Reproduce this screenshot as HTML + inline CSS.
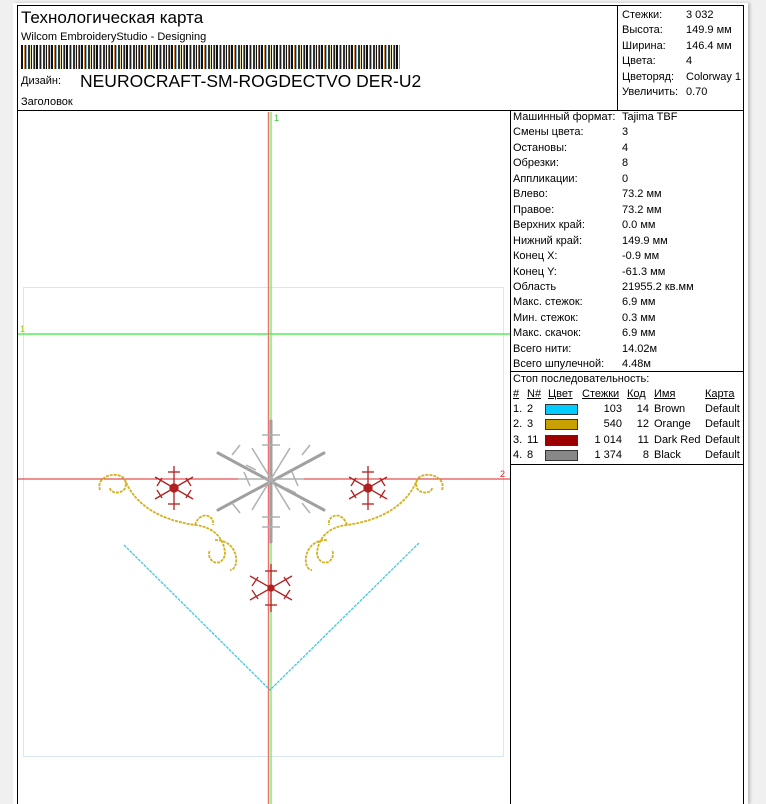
<!DOCTYPE html>
<html style="width:766px;height:804px;overflow:hidden"><head><meta charset="utf-8"><style>
*{margin:0;padding:0;box-sizing:border-box}
body{width:766px;height:804px;background:#f0f0f0;position:relative;overflow:hidden;font-family:"Liberation Sans",sans-serif;color:#000}
.a{position:absolute;white-space:nowrap}
.page{position:absolute;left:13px;top:3px;width:735px;height:801px;background:#fff;box-shadow:2px 0 3px #bbb}
.r{font-size:11px;line-height:15.45px}
.u{text-decoration:underline}
</style></head><body>
<div class="page"></div>
<div class="a" style="left:17px;top:5px;width:727px;height:799px;border:1px solid #000;border-bottom:none"></div>
<div class="a" style="left:17px;top:110px;width:727px;border-top:1.5px solid #000"></div>
<div class="a" style="left:617px;top:5px;width:127px;height:106px;border:1px solid #000"></div>
<div class="a" style="left:510px;top:111px;height:693px;border-left:1px solid #000"></div>
<div class="a" style="left:510px;top:371px;width:234px;border-top:1px solid #000"></div>
<div class="a" style="left:510px;top:464px;width:234px;border-top:1px solid #000"></div>

<div class="a" style="left:21px;top:8px;font-size:17px">Технологическая карта</div>
<div class="a" style="left:21px;top:31px;font-size:11px">Wilcom EmbroideryStudio - Designing</div>
<div class="a" style="left:21px;top:45px;width:379px;height:24px;background:repeating-linear-gradient(90deg,#111 0 2px,#fff 2px 3px,#d8842c 3px 4px,#222 4px 5px,#7ab8e0 5px 6px,#fff 6px 7px,#333 7px 9px,#f0e090 9px 10px,#111 10px 11px,#fff 11px 12px,#8a6a50 12px 13px,#222 13px 14px,#c0d8f0 14px 15px)"></div>
<div class="a" style="left:21px;top:75px;font-size:11px">Дизайн:</div>
<div class="a" style="left:80px;top:71px;font-size:17.5px">NEUROCRAFT-SM-ROGDECTVO DER-U2</div>
<div class="a" style="left:21px;top:96px;font-size:11px">Заголовок</div>

<div class="a r" style="left:622px;top:8px">Стежки:<br>Высота:<br>Ширина:<br>Цвета:<br>Цветоряд:<br>Увеличить:</div>
<div class="a r" style="left:686px;top:8px">3 032<br>149.9 мм<br>146.4 мм<br>4<br>Colorway 1<br>0.70</div>

<div class="a r" style="left:513px;top:110px">Машинный формат:<br>Смены цвета:<br>Остановы:<br>Обрезки:<br>Аппликации:<br>Влево:<br>Правое:<br>Верхних край:<br>Нижний край:<br>Конец X:<br>Конец Y:<br>Область<br>Макс. стежок:<br>Мин. стежок:<br>Макс. скачок:<br>Всего нити:<br>Всего шпулечной:</div>
<div class="a r" style="left:622px;top:110px">Tajima TBF<br>3<br>4<br>8<br>0<br>73.2 мм<br>73.2 мм<br>0.0 мм<br>149.9 мм<br>-0.9 мм<br>-61.3 мм<br>21955.2 кв.мм<br>6.9 мм<br>0.3 мм<br>6.9 мм<br>14.02м<br>4.48м</div>

<div class="a r" style="left:513px;top:372px">Стоп последовательность:</div>
<div class="a r u" style="left:513px;top:387px">#</div>
<div class="a r u" style="left:527px;top:387px">N#</div>
<div class="a r u" style="left:548px;top:387px">Цвет</div>
<div class="a r u" style="left:582px;top:387px">Стежки</div>
<div class="a r u" style="left:627px;top:387px">Код</div>
<div class="a r u" style="left:654px;top:387px">Имя</div>
<div class="a r u" style="left:705px;top:387px">Карта</div>
<div class="a r" style="left:513px;top:402px">1.<br>2.<br>3.<br>4.</div>
<div class="a r" style="left:527px;top:402px">2<br>3<br>11<br>8</div>
<div class="a" style="left:545px;top:404px;width:33px;height:11px;background:#00ccff;border:1px solid #333"></div>
<div class="a" style="left:545px;top:419px;width:33px;height:11px;background:#c8a000;border:1px solid #333"></div>
<div class="a" style="left:545px;top:435px;width:33px;height:11px;background:#9c0000;border:1px solid #333"></div>
<div class="a" style="left:545px;top:450px;width:33px;height:11px;background:#888;border:1px solid #333"></div>
<div class="a r" style="left:582px;top:402px;width:40px;text-align:right">103<br>540<br>1 014<br>1 374</div>
<div class="a r" style="left:626px;top:402px;width:23px;text-align:right">14<br>12<br>11<br>8</div>
<div class="a r" style="left:654px;top:402px">Brown<br>Orange<br>Dark Red<br>Black</div>
<div class="a r" style="left:705px;top:402px">Default<br>Default<br>Default<br>Default</div>

<svg class="a" style="left:0;top:0" width="766" height="804">
<rect x="23.5" y="287.5" width="480" height="469" fill="none" stroke="#d8e8ee"/>
<line x1="18" y1="334" x2="510" y2="334" stroke="#55ee55" stroke-width="1.5"/>
<line x1="271" y1="112" x2="271" y2="804" stroke="#55ee55" stroke-width="1.2"/>
<line x1="268.5" y1="112" x2="268.5" y2="804" stroke="#f07070" stroke-width="1.5"/>
<line x1="18" y1="479" x2="510" y2="479" stroke="#e02020" stroke-width="1"/>
<text x="274" y="121" font-size="9" fill="#33cc33" font-family="Liberation Sans">1</text>
<text x="20" y="332" font-size="9" fill="#99cc00" font-family="Liberation Sans">1</text>
<text x="500" y="477" font-size="9" fill="#e02020" font-family="Liberation Sans">2</text>
<polyline points="124,545 270,690 419,543" fill="none" stroke="#40c8e0" stroke-width="1.3" stroke-dasharray="3,1"/>
<g stroke="#a0a0a0" stroke-width="3" stroke-linecap="round">
<line x1="271" y1="421" x2="271" y2="542"/><line x1="218" y1="453" x2="324" y2="510"/><line x1="218" y1="510" x2="324" y2="453"/>
</g>
<g stroke="#b0b0b0" stroke-width="1.5">
<line x1="238" y1="479" x2="304" y2="479"/><line x1="252" y1="448" x2="290" y2="510"/><line x1="252" y1="510" x2="290" y2="448"/>
<line x1="262" y1="435" x2="280" y2="435"/><line x1="262" y1="527" x2="280" y2="527"/><line x1="262" y1="445" x2="280" y2="445"/><line x1="262" y1="517" x2="280" y2="517"/>
<line x1="232" y1="455" x2="240" y2="445"/><line x1="302" y1="455" x2="310" y2="445"/><line x1="232" y1="503" x2="240" y2="513"/><line x1="302" y1="503" x2="310" y2="513"/>
<line x1="244" y1="472" x2="250" y2="486"/><line x1="292" y1="472" x2="298" y2="486"/><line x1="246" y1="465" x2="256" y2="470"/><line x1="286" y1="488" x2="296" y2="493"/>
</g>
<g stroke="#b02020" stroke-width="1.3">
<g transform="translate(174,488)"><line x1="0" y1="-22" x2="0" y2="22"/><line x1="-19" y1="-11" x2="19" y2="11"/><line x1="-19" y1="11" x2="19" y2="-11"/><line x1="-6" y1="-16" x2="6" y2="-16"/><line x1="-6" y1="16" x2="6" y2="16"/><line x1="-17" y1="-2" x2="-12" y2="-10"/><line x1="17" y1="2" x2="12" y2="10"/><line x1="-17" y1="2" x2="-12" y2="10"/><line x1="17" y1="-2" x2="12" y2="-10"/><circle r="4" fill="#b02020"/></g>
<g transform="translate(368,488)"><line x1="0" y1="-22" x2="0" y2="22"/><line x1="-19" y1="-11" x2="19" y2="11"/><line x1="-19" y1="11" x2="19" y2="-11"/><line x1="-6" y1="-16" x2="6" y2="-16"/><line x1="-6" y1="16" x2="6" y2="16"/><line x1="-17" y1="-2" x2="-12" y2="-10"/><line x1="17" y1="2" x2="12" y2="10"/><line x1="-17" y1="2" x2="-12" y2="10"/><line x1="17" y1="-2" x2="12" y2="-10"/><circle r="4" fill="#b02020"/></g>
<g transform="translate(271,588)"><line x1="0" y1="-24" x2="0" y2="24"/><line x1="-21" y1="-12" x2="21" y2="12"/><line x1="-21" y1="12" x2="21" y2="-12"/><line x1="-6" y1="-17" x2="6" y2="-17"/><line x1="-6" y1="17" x2="6" y2="17"/><line x1="-19" y1="-2" x2="-13" y2="-11"/><line x1="19" y1="2" x2="13" y2="11"/><line x1="-19" y1="2" x2="-13" y2="11"/><line x1="19" y1="-2" x2="13" y2="-11"/><circle r="3" fill="#b02020"/></g>
</g>
<g fill="none" stroke="#d4b020" stroke-width="1.8" stroke-dasharray="3,1">
<path d="M100,490 C95,475 120,470 125,480 C135,505 160,520 195,525 C215,527 225,540 225,555 C220,570 205,560 210,550"/>
<path d="M195,525 C200,510 215,515 213,525"/><path d="M215,540 C240,540 240,570 230,570"/><path d="M125,480 C130,495 110,495 110,488"/>
<path d="M442,490 C447,475 422,470 417,480 C407,505 382,520 347,525 C327,527 317,540 317,555 C322,570 337,560 332,550"/>
<path d="M347,525 C342,510 327,515 329,525"/><path d="M327,540 C302,540 302,570 312,570"/><path d="M417,480 C412,495 432,495 432,488"/>
</g>
</svg>
</body></html>
